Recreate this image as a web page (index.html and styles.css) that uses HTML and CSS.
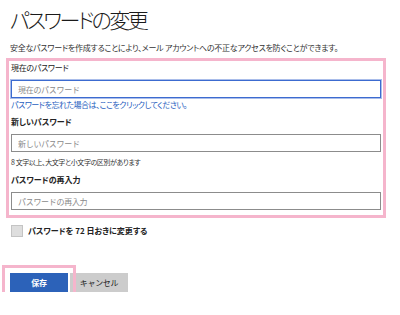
FILE: index.html
```html
<!DOCTYPE html>
<html lang="ja">
<head>
    <meta charset="UTF-8">
    <title>パスワードの変更</title>
    <link rel="stylesheet" href="styles.css">
</head>
<body>
<div class="page">
    <h1 class="title">パスワードの変更</h1>
    <p class="intro">安全なパスワードを作成することにより、メール アカウントへの不正なアクセスを防ぐことができます。</p>

    <!--入力欄はピンクの枠で囲む-->
    <div class="fields">
        <label class="field-label" for="cur">現在のパスワード</label>
        <input class="text-input focused" id="cur" type="password" placeholder="現在のパスワード">
        <a class="forgot" href="#">パスワードを忘れた場合は、ここをクリックしてください。</a>

        <label class="field-label strong" for="new">新しいパスワード</label>
        <input class="text-input" id="new" type="password" placeholder="新しいパスワード">
        <p class="hint">8 文字以上、大文字と小文字の区別があります</p>

        <label class="field-label strong" for="again">パスワードの再入力</label>
        <input class="text-input" id="again" type="password" placeholder="パスワードの再入力">
    </div>

    <label class="renew"><span class="check"></span>パスワードを 72 日おきに変更する</label>

    <div class="actions">
        <button class="btn primary">保存</button>
        <button class="btn">キャンセル</button>
    </div>
</div>
</body>
</html>
```

FILE: styles.css
```css
* {
    margin: 0;
    padding: 0;
    box-sizing: border-box;
}

body {
    background: #fff;
    color: #222;
    font-family: "Noto Sans CJK JP", "Noto Sans", sans-serif;
    font-feature-settings: "palt";
}

.page {
    padding: 9px 0 0 6px;
    width: 400px;
}

.title {
    margin-left: 4px;
    font-size: 21px;
    line-height: 21px;
    font-weight: 300;
    letter-spacing: -2.6px;
    color: #1a1a1a;
}

.intro {
    margin: 13px 0 0 4px;
    font-size: 8px;
    line-height: 10px;
    letter-spacing: -0.25px;
    color: #333;
}

/* ピンクの枠 */
.fields {
    display: flex;
    flex-direction: column;
    align-items: flex-start;
    width: 380px;
    margin-top: 5px;
    padding: 2px 0 5px 2px;
    border: 3px solid #f5b5cc;
}

.field-label {
    font-size: 8px;
    line-height: 10px;
    letter-spacing: -0.3px;
    color: #222;
}

.field-label.strong {
    font-weight: bold;
    letter-spacing: 0;
    margin-top: 7px;
}

.text-input {
    width: 370px;
    height: 18px;
    margin-top: 7px;
    padding: 0 6px;
    border: 1px solid #8c8c8c;
    font-family: inherit;
    font-size: 8px;
    letter-spacing: -0.3px;
    outline: none;
}

.text-input::placeholder {
    color: #8a8a8a;
}

.text-input.focused {
    border-color: #3c6bd0;
    box-shadow: 0 0 0 1px #a9bdea;
}

.forgot {
    margin-top: 2px;
    font-size: 8px;
    line-height: 10px;
    letter-spacing: -0.5px;
    color: #2860c0;
    text-decoration: none;
}

.hint {
    margin-top: 6px;
    font-size: 7px;
    line-height: 9px;
    letter-spacing: -0.4px;
    color: #333;
}

.hint + .field-label.strong {
    margin-top: 8px;
}

.renew {
    display: flex;
    align-items: center;
    margin: 7px 0 0 5px;
    font-size: 8px;
    line-height: 12px;
    font-weight: bold;
}

.check {
    width: 12px;
    height: 12px;
    margin-right: 5px;
    border: 1px solid #c4c4c4;
    background: #dedede;
}

.actions {
    display: flex;
    gap: 2px;
    margin: 36px 0 0 4px;
}

.btn {
    width: 58px;
    height: 19px;
    border: 0;
    background: #cccccc;
    color: #222;
    font-family: inherit;
    font-size: 8px;
    letter-spacing: -0.3px;
}

.btn.primary {
    position: relative;
    background: #2c62b9;
    color: #fff;
    font-weight: bold;
}

/* 保存ボタンのピンクの枠 */
.btn.primary::after {
    content: "";
    position: absolute;
    left: -8px;
    top: -8px;
    right: -8px;
    bottom: -8px;
    border: 3px solid #f5b5cc;
}
```
